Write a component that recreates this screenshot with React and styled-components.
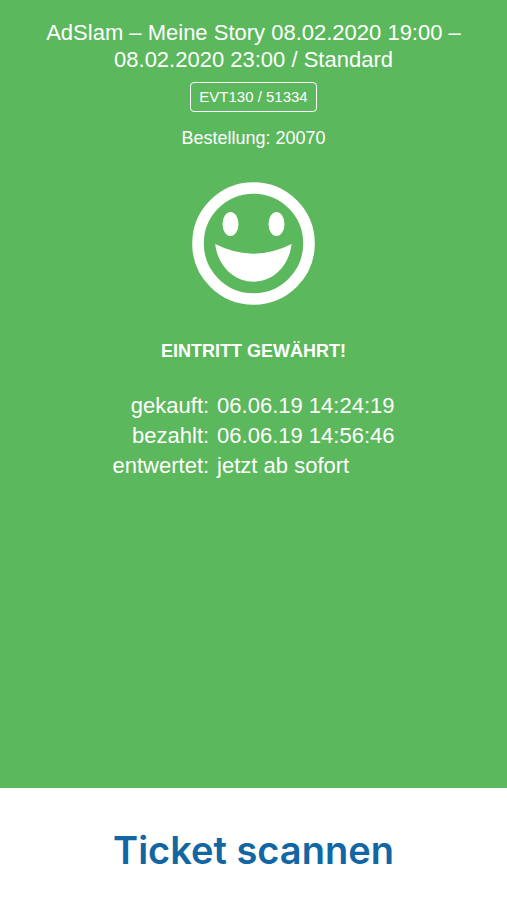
import React from "react";
import styled, { createGlobalStyle } from "styled-components";

const GlobalStyle = createGlobalStyle`
  * {
    box-sizing: border-box;
  }
  body {
    margin: 0;
    font-family: "Liberation Sans", Arial, sans-serif;
  }
`;

const Screen = styled.div`
  display: flex;
  flex-direction: column;
  min-height: 100vh;
  background: #fff;
`;
const Result = styled.main`
  display: flex;
  flex: 1;
  flex-direction: column;
  align-items: center;
  padding: 19px 40px;
  background: #5cb85c;
  color: #fff;
  text-align: center;
`;
const Title = styled.h1`
  margin: 0;
  font-size: 22px;
  font-weight: 400;
  line-height: 27px;
`;
const TicketCode = styled.div`
  margin-top: 9px;
  padding: 4px 8px;
  border: 1px solid #fff;
  border-radius: 4px;
  font-size: 15px;
  line-height: 20px;
`;
const Order = styled.div`
  margin-top: 16px;
  font-size: 18px;
  line-height: 20px;
`;
const Smiley = styled.svg`
  width: 123px;
  height: 123px;
  margin-top: 34px;
`;
const Status = styled.h2`
  margin: 36px 0 0;
  font-size: 18px;
  font-weight: 700;
  line-height: 20px;
  text-transform: uppercase;
`;
const Details = styled.table`
  margin-top: 30px;
  border-collapse: collapse;
  font-size: 22px;
  line-height: 30px;
`;
const Label = styled.th`
  padding: 0 8px 0 0;
  font-weight: 400;
  text-align: right;
`;
const Value = styled.td`
  padding: 0;
  text-align: left;
`;
const ScanButton = styled.button`
  width: 100%;
  padding: 40px 20px 28px;
  border: 0;
  background: #fff;
  color: #1266a3;
  font-family: Inter, sans-serif;
  font-size: 38px;
  font-weight: 600;
  line-height: 44px;
  cursor: pointer;
`;

const details = [
  { label: "gekauft:", value: "06.06.19 14:24:19" },
  { label: "bezahlt:", value: "06.06.19 14:56:46" },
  { label: "entwertet:", value: "jetzt ab sofort" },
];

const App = () => {
  return (
    <>
      <GlobalStyle />
      <Screen>
        <Result>
          <Title>
            AdSlam – Meine Story 08.02.2020 19:00 – 08.02.2020 23:00 / Standard
          </Title>
          <TicketCode>EVT130 / 51334</TicketCode>
          <Order>Bestellung: 20070</Order>
          <Smiley viewBox="0 0 123 123" fill="#fff" aria-hidden="true">
            <circle
              cx="61.5"
              cy="61.5"
              r="55.5"
              fill="none"
              stroke="#fff"
              strokeWidth="11.6"
            />
            <ellipse cx="38.5" cy="42" rx="8" ry="12" />
            <ellipse cx="84.5" cy="42" rx="8" ry="12" />
            <path d="M23.2 62 Q61.5 81.4 99.6 62 C97 84 81 99.7 61.5 99.7 C42 99.7 25.8 84 23.2 62Z" />
          </Smiley>
          <Status>Eintritt gewährt!</Status>
          <Details>
            <tbody>
              {details.map((item) => (
                <tr key={item.label}>
                  <Label scope="row">{item.label}</Label>
                  <Value>{item.value}</Value>
                </tr>
              ))}
            </tbody>
          </Details>
        </Result>
        <ScanButton type="button">Ticket scannen</ScanButton>
      </Screen>
    </>
  );
};

export default App;
